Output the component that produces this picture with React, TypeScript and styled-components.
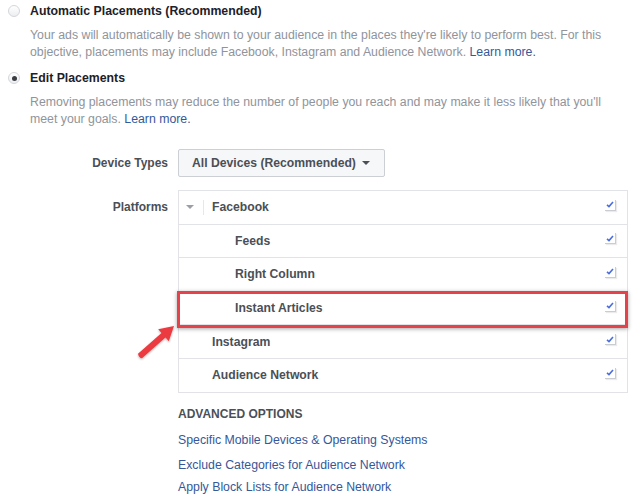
import React from "react";
import styled, { createGlobalStyle } from "styled-components";

const Global = createGlobalStyle`
  html, body { margin: 0; padding: 0; background: #fff; }
  body { font-family: "Liberation Sans", Arial, sans-serif; -webkit-font-smoothing: antialiased; }
`;

const Page = styled.div`
  width: 638px;
  height: 498px;
  overflow: hidden;
  box-sizing: border-box;
  padding: 2px 10px 0 8px;
  position: relative;
`;

const OptionRow = styled.div<{ $top: number }>`
  display: flex;
  align-items: center;
  gap: 10px;
  height: 18px;
  margin-top: ${(p) => p.$top}px;
`;

const Radio = styled.span<{ $checked?: boolean }>`
  width: 12px;
  height: 12px;
  border-radius: 50%;
  box-sizing: border-box;
  border: 1px solid #d4d6da;
  background: linear-gradient(#ffffff, #eceef1);
  display: flex;
  align-items: center;
  justify-content: center;
  &::after {
    content: "";
    width: 5px;
    height: 5px;
    border-radius: 50%;
    background: #3b3d42;
    display: ${(p) => (p.$checked ? "block" : "none")};
  }
`;

const OptionTitle = styled.span`
  font-size: 12.3px;
  font-weight: bold;
  color: #1d2129;
`;

const Desc = styled.p`
  margin: 7px 0 0 22px;
  font-size: 12.3px;
  line-height: 16.5px;
  color: #90949c;
`;

const Link = styled.a`
  color: #365899;
  text-decoration: none;
`;

const FormGrid = styled.div`
  display: grid;
  grid-template-columns: 160px 1fr;
  column-gap: 10px;
  row-gap: 13px;
  margin-top: 22px;
`;

const Label = styled.div<{ $h: number }>`
  font-size: 12px;
  font-weight: bold;
  color: #4b4f56;
  text-align: right;
  height: ${(p) => p.$h}px;
  line-height: ${(p) => p.$h}px;
`;

const Dropdown = styled.div`
  width: 207px;
  height: 28px;
  box-sizing: border-box;
  border: 1px solid #ccd0d5;
  border-radius: 2px;
  background: #f6f7f9;
  display: flex;
  align-items: center;
  padding: 0 10px 0 13px;
  gap: 6px;
  font-size: 12.2px;
  font-weight: bold;
  color: #4b4f56;
  white-space: nowrap;
`;

const Caret = styled.span<{ $color: string; $size: number }>`
  width: 0;
  height: 0;
  border-left: ${(p) => p.$size}px solid transparent;
  border-right: ${(p) => p.$size}px solid transparent;
  border-top: ${(p) => p.$size}px solid ${(p) => p.$color};
`;

const TableWrap = styled.div`
  position: relative;
  width: 450px;
`;

const Table = styled.div`
  border: 1px solid #e1e3e6;
  border-bottom: none;
`;

const Row = styled.div`
  display: flex;
  align-items: center;
  height: 33.6px;
  box-sizing: border-box;
  border-bottom: 1px solid #e1e3e6;
  padding-right: 11px;
`;

const RowLead = styled.div<{ $indent: number }>`
  display: flex;
  align-items: center;
  flex: 1;
  padding-left: ${(p) => p.$indent}px;
`;

const Toggle = styled.div`
  display: flex;
  align-items: center;
  gap: 9px;
  margin-left: 7px;
`;

const Divider = styled.span`
  width: 1px;
  height: 15px;
  background: #e5e7ea;
  margin-right: 8px;
`;

const RowText = styled.span`
  font-size: 12.2px;
  font-weight: bold;
  color: #4b4f56;
`;

const Check = styled.span`
  width: 11px;
  height: 11px;
  box-sizing: border-box;
  background: #fff;
  border-right: 1px solid #c9ccd1;
  border-bottom: 1px solid #c9ccd1;
  box-shadow: 1px 1px 1px rgba(0, 0, 0, 0.08);
  display: flex;
  align-items: center;
  justify-content: center;
  margin-top: -4px;
`;

const Highlight = styled.div`
  position: absolute;
  left: -1px;
  top: 101px;
  width: 451px;
  height: 37px;
  box-sizing: border-box;
  border: 3px solid #e5434b;
  box-shadow: 0 1px 4px rgba(0, 0, 0, 0.35);
  pointer-events: none;
`;

const Arrow = styled.svg`
  position: absolute;
  left: -42px;
  top: 133px;
  overflow: visible;
`;

const Advanced = styled.div`
  grid-column: 2;
  display: flex;
  flex-direction: column;
  margin-top: 0;
`;

const AdvTitle = styled.div`
  font-size: 12px;
  font-weight: bold;
  color: #4b4f56;
  height: 16px;
  line-height: 16px;
`;

const AdvLink = styled.a<{ $mt: number }>`
  color: #365899;
  text-decoration: none;
  font-size: 12.3px;
  line-height: 16px;
  margin-top: ${(p) => p.$mt}px;
`;

const CheckIcon = () => (
  <svg width="8" height="7" viewBox="0 0 8 7">
    <path d="M1 3.8 L3 5.6 L7 1" fill="none" stroke="#4a6ee0" strokeWidth="1.6" />
  </svg>
);

const rows = [
  { text: "Facebook", indent: 0, parent: true },
  { text: "Feeds", indent: 56 },
  { text: "Right Column", indent: 56 },
  { text: "Instant Articles", indent: 56 },
  { text: "Instagram", indent: 33 },
  { text: "Audience Network", indent: 33 },
];

export default function App() {
  return (
    <Page>
      <Global />
      <OptionRow $top={0}>
        <Radio />
        <OptionTitle>Automatic Placements (Recommended)</OptionTitle>
      </OptionRow>
      <Desc>
        Your ads will automatically be shown to your audience in the places they're likely to perform best. For this
        <br />
        objective, placements may include Facebook, Instagram and Audience Network. <Link>Learn more.</Link>
      </Desc>
      <OptionRow $top={9}>
        <Radio $checked />
        <OptionTitle>Edit Placements</OptionTitle>
      </OptionRow>
      <Desc>
        Removing placements may reduce the number of people you reach and may make it less likely that you'll
        <br />
        meet your goals. <Link>Learn more.</Link>
      </Desc>
      <FormGrid>
        <Label $h={28}>Device Types</Label>
        <Dropdown>
          All Devices (Recommended)
          <Caret $color="#4b4f56" $size={4.5} />
        </Dropdown>
        <Label $h={34}>Platforms</Label>
        <TableWrap>
          <Table>
            {rows.map((r) => (
              <Row key={r.text}>
                <RowLead $indent={r.indent}>
                  {r.parent && (
                    <Toggle>
                      <Caret $color="#9a9ea5" $size={4} />
                      <Divider />
                    </Toggle>
                  )}
                  <RowText>{r.text}</RowText>
                </RowLead>
                <Check>
                  <CheckIcon />
                </Check>
              </Row>
            ))}
          </Table>
          <Highlight />
          <Arrow width="42" height="38" viewBox="0 0 42 38">
            <defs>
              <filter id="sh" x="-30%" y="-30%" width="160%" height="160%">
                <feDropShadow dx="0" dy="1" stdDeviation="1" floodColor="#000" floodOpacity="0.3" />
              </filter>
            </defs>
            <path
              d="M2 30.75 L25.5 10 L22.2 6.2 L38 3 L32.8 18.2 L29.5 14.5 L6 35.25 Q3 35 2 30.75 Z"
              fill="#ec3b3f"
              filter="url(#sh)"
              strokeLinejoin="round"
            />
          </Arrow>
        </TableWrap>
        <Advanced>
          <AdvTitle>ADVANCED OPTIONS</AdvTitle>
          <AdvLink $mt={10}>Specific Mobile Devices &amp; Operating Systems</AdvLink>
          <AdvLink $mt={9}>Exclude Categories for Audience Network</AdvLink>
          <AdvLink $mt={6}>Apply Block Lists for Audience Network</AdvLink>
        </Advanced>
      </FormGrid>
    </Page>
  );
}
